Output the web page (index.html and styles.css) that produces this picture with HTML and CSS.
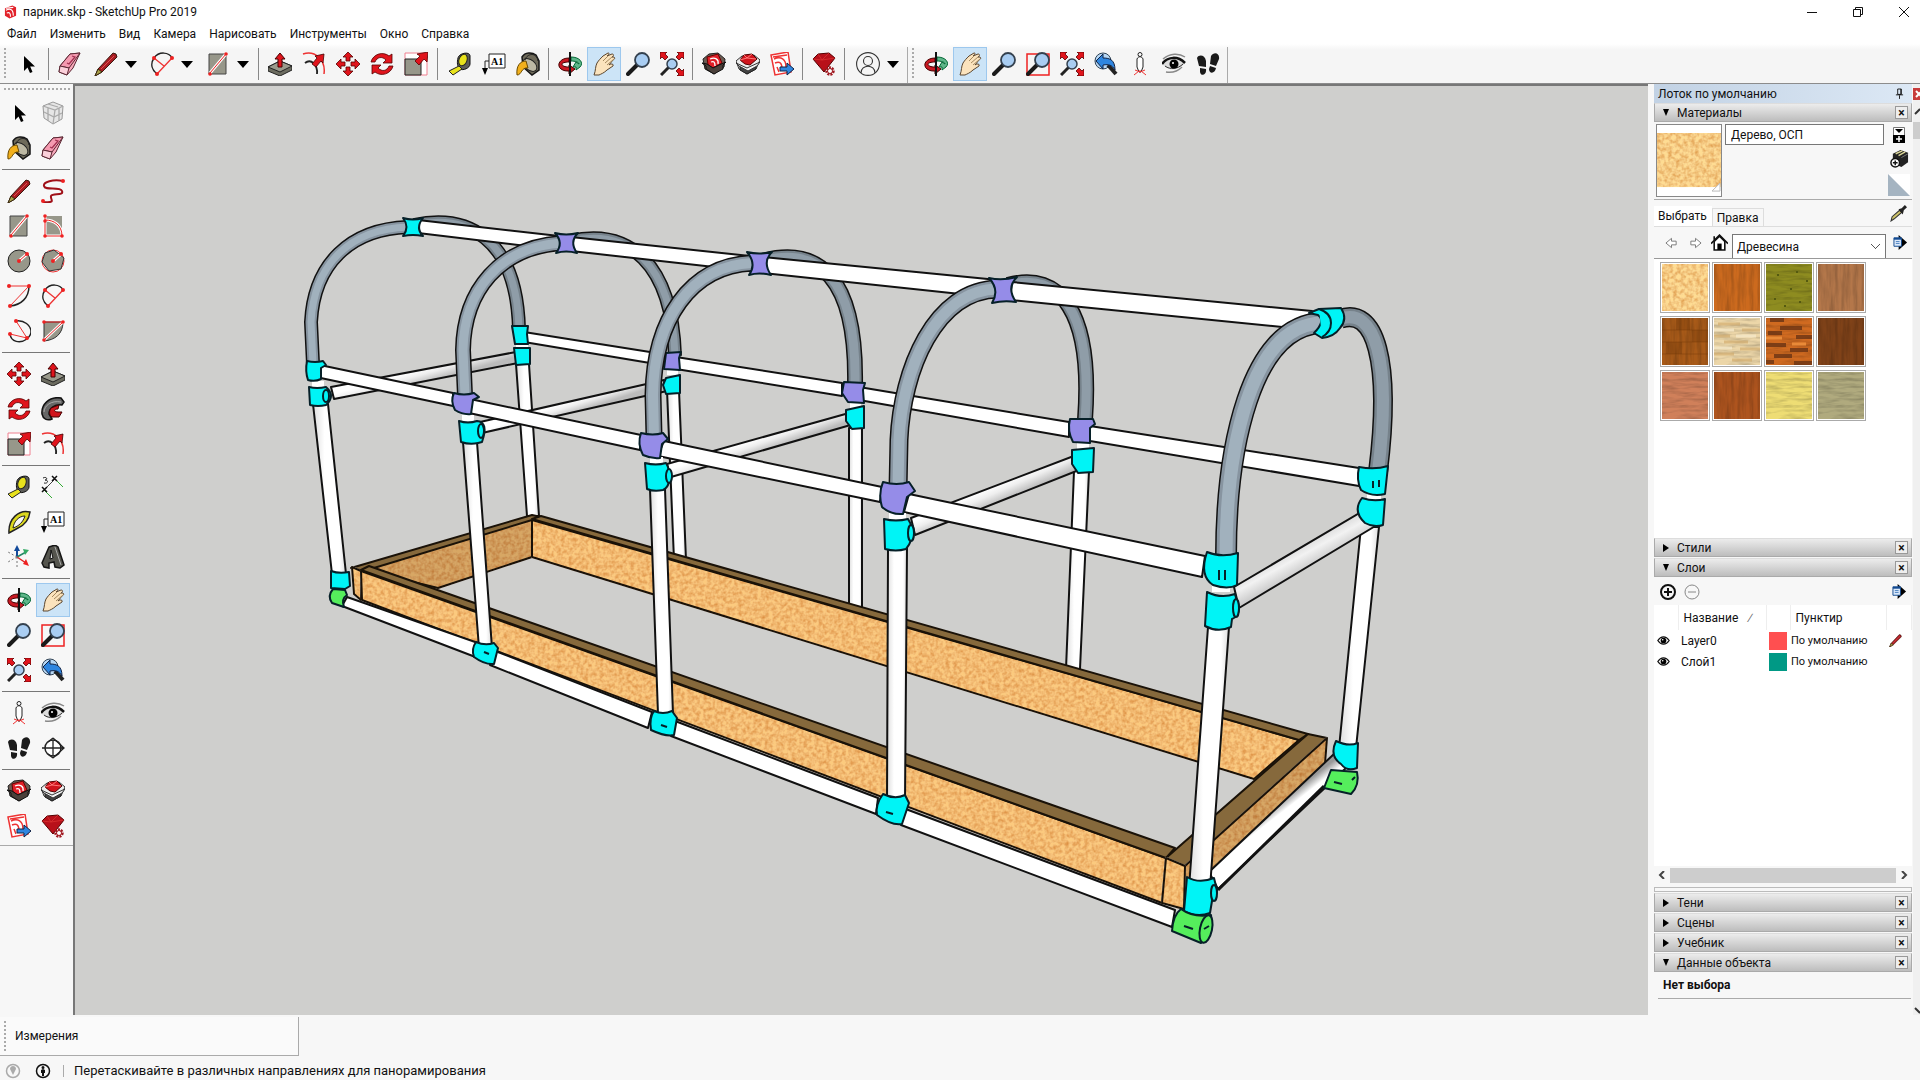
FILE: index.html
```html
<!DOCTYPE html>
<html lang="ru">
<head>
<meta charset="utf-8">
<title>парник.skp - SketchUp Pro 2019</title>
<link rel="stylesheet" href="styles.css">
</head>
<body>
<svg class="defs" aria-hidden="true">
<symbol id="cursor" viewBox="0 0 24 24"><path d="M8 4v15l3.500-3.500L14 21l2.500-1-2.300-5.500H19z"/></symbol>
<symbol id="eraser" viewBox="0 0 24 24"><path d="M12 2l10-1-7 15-6 7-8-3 1-6z" fill="#f7a9bb" stroke="#5b2733"/><path d="M12 2l10-1-11 15-9-2z" fill="#f59ab0" stroke="#5b2733"/><path d="M2 14l9 2-2 7-8-3z" fill="#fbd0da" stroke="#5b2733"/><path d="M14 4l3 1-6 7-2-1" fill="none" stroke="#a03050" stroke-width="1.300"/></symbol>
<symbol id="pencil" viewBox="0 0 24 24"><path d="M19 1l3 1 1 3L8 20l-7 4 3-7z" fill="#a81c22" stroke="#3a1a10"/><path d="M4 17l4 3-7 4z" fill="#a8a04a" stroke="#3a2a10"/><path d="M7 17L20 4" stroke="#e05050"/></symbol>
<symbol id="arc2" viewBox="0 0 24 24"><path d="M4 6C0 12 2 18 7 22" fill="none" stroke="#222" stroke-width="1.500"/><path d="M4 6C9-1 19 0 22 6" fill="none" stroke="#222" stroke-width="1.500"/><path d="M4 6l10 8M22 6L7 22" fill="none" stroke="#e33" stroke-width="1.300"/><g fill="#e22"><circle cx="4" cy="6" r="2"/><circle cx="22" cy="6" r="2"/><circle cx="7" cy="22" r="2"/></g></symbol>
<symbol id="rect" viewBox="0 0 24 24"><path d="M3 2h17v20H3z" fill="#97978a" stroke="#444"/><path d="M4 21L20 2" stroke="#fff" stroke-width="3"/><path d="M4 21L20 2" stroke="#e22"/><g fill="#e22"><circle cx="4" cy="22" r="1.800"/><circle cx="20" cy="2" r="1.800"/></g></symbol>
<symbol id="rrect" viewBox="0 0 24 24"><path d="M4 2h17v20H4z" fill="#97978a"/><path d="M4 6c9 0 17 5 17 16H4V2" fill="none" stroke="#fff" stroke-width="3"/><path d="M4 6c9 0 17 5 17 16H4V2" fill="none" stroke="#e22"/><g fill="#e22"><circle cx="4" cy="2" r="1.800"/><circle cx="4" cy="7" r="1.800"/><circle cx="4" cy="22" r="1.800"/><circle cx="21" cy="22" r="1.800"/></g></symbol>
<symbol id="circle" viewBox="0 0 24 24"><circle cx="12" cy="12" r="11" fill="#97978a" stroke="#222"/><path d="M12 12l8-7" stroke="#fff" stroke-width="3"/><path d="M12 12l8-7" stroke="#e22"/><g fill="#e22"><circle cx="12" cy="12" r="2"/><circle cx="20" cy="5" r="2"/></g></symbol>
<symbol id="poly" viewBox="0 0 24 24"><circle cx="12" cy="12" r="11" fill="none" stroke="#e33"/><path d="M13 1l10 8-3 11-12 2-7-9 3-9z" fill="#97978a" stroke="#333"/><path d="M12 12l8-7" stroke="#fff" stroke-width="3"/><path d="M12 12l8-7" stroke="#e22"/><g fill="#e22"><circle cx="12" cy="12" r="2"/><circle cx="20" cy="5" r="2"/></g></symbol>
<symbol id="arc1" viewBox="0 0 24 24"><path d="M22 2c0 12-8 19-19 20" fill="none" stroke="#222" stroke-width="1.500"/><path d="M2 2h20L3 22" fill="none" stroke="#e33"/><g fill="#e22"><circle cx="2" cy="2" r="2"/><circle cx="22" cy="2" r="2"/><circle cx="3" cy="22" r="2"/></g></symbol>
<symbol id="arc3" viewBox="0 0 24 24"><path d="M9 2c8-1 15 4 15 11 0 3-2 5-4 7-7 5-16 3-17-5" fill="none" stroke="#222" stroke-width="1.500"/><path d="M9 2l11 17L3 15" fill="none" stroke="#e33"/><g fill="#e22"><circle cx="9" cy="2" r="2"/><circle cx="20" cy="19" r="2"/><circle cx="3" cy="15" r="2"/></g></symbol>
<symbol id="pie" viewBox="0 0 24 24"><path d="M3 3h19c0 12-8 18-19 19z" fill="#97978a" stroke="#333"/><path d="M22 3L3 21" stroke="#fff" stroke-width="3"/><path d="M3 3h19L3 21" fill="none" stroke="#e22"/><g fill="#e22"><circle cx="3" cy="3" r="1.800"/><circle cx="22" cy="3" r="1.800"/><circle cx="3" cy="21" r="1.800"/></g></symbol>
<symbol id="free" viewBox="0 0 24 24"><path d="M22 2C12 0 2 3 3 7c1 5 16 0 18 5s-9 2-11 5c-1 4 6 7-8 6" fill="none" stroke="#a01018" stroke-width="2"/><g fill="#e22"><circle cx="22" cy="2" r="2"/><circle cx="2" cy="22" r="2"/></g></symbol>
<symbol id="push" viewBox="0 0 24 24"><path d="M0 15l12-6 12 5v4l-12 6-12-5z" fill="#6c6c60" stroke="#222"/><path d="M0 15l12-6 12 5-12 6z" fill="#9a9a8c" stroke="#222"/><path d="M12 1l5 6h-3v8h-4V7H7z" fill="#e0141c" stroke="#400"/></symbol>
<symbol id="offset" viewBox="0 0 24 24"><path d="M1 2C13-2 24 8 22 22" fill="none" stroke="#e33" stroke-width="1.500"/><path d="M3 11c6-5 13 2 12 11" fill="none" stroke="#222" stroke-width="1.800"/><path d="M22 2l-1 9-2-2-5 6-4-3 5-6-2-2z" fill="#e0141c" stroke="#400" stroke-width=".8"/></symbol>
<symbol id="move" viewBox="0 0 24 24"><g fill="#e0141c" stroke="#500" stroke-width=".8"><path id="mv" d="M12 0l5 5h-3v4h-4V5H7z"/><use href="#mv" transform="rotate(90 12 12)"/><use href="#mv" transform="rotate(180 12 12)"/><use href="#mv" transform="rotate(270 12 12)"/></g></symbol>
<symbol id="rot" viewBox="0 0 24 24"><g fill="#e0141c" stroke="#500" stroke-width=".8"><path id="rt" d="M1 10C3 2 13-1 19 4l3-2v9h-9l3-3C12 4 7 5 5 10z"/><use href="#rt" transform="rotate(180 12 12)"/></g></symbol>
<symbol id="scale" viewBox="0 0 24 24"><path d="M1 1h22v22H1z" fill="#fff" stroke="#f08090"/><path d="M1 7h16v16H1z" fill="#97978a" stroke="#222"/><path d="M24 0l-1 10-3-3-5 6-4-4 5-5-3-2z" fill="#e0141c" stroke="#500" stroke-width=".8"/></symbol>
<symbol id="follow" viewBox="0 0 24 24"><path d="M20 1C8-1 0 8 1 17c1 5 5 7 10 5l-3-5c0-6 6-10 13-9l2-3z" fill="#666" stroke="#111" stroke-width="1.500"/><path d="M3 15c0-6 7-12 17-10" fill="none" stroke="#aaa"/><path d="M10 11l8-3-1 4c-5 0-4 3 0 3l4 0-3 5-7 0c-3-2-3-6-1-9z" fill="#d0141c" stroke="#400"/></symbol>
<symbol id="tape" viewBox="0 0 24 24"><path d="M10 6c1-5 12-7 12-2v8c0 4-7 7-10 5s-3-7-2-11z" fill="#5c5c58" stroke="#111"/><ellipse cx="15" cy="8" rx="4" ry="6" fill="#e8e21c" stroke="#222" transform="rotate(20 15 8)"/><path d="M11 14l3 3-9 6-4-4z" fill="#e8e21c" stroke="#222"/></symbol>
<symbol id="bucket" viewBox="0 0 24 24"><path d="M6 5c3-5 10-5 14-2l3 6v9l-7 5-9-8z" fill="#6e6a5a" stroke="#151515" stroke-width="1.500"/><ellipse cx="14" cy="13" rx="8" ry="5" fill="#bdb9a4" stroke="#222" transform="rotate(40 14 13)"/><path d="M10 9C4 9 0 14 1 23c5 0 4-8 11-7z" fill="#f2b01c" stroke="#6a4a00"/><path d="M9 8c2-7 12-8 13 1" fill="none" stroke="#222"/></symbol>
<symbol id="orbit" viewBox="0 0 24 24"><path d="M11 6C2 6-2 13 3 17c3 2 5 2 8 2v3l6-5-6-4v2c-4 0-7-1-7-3 0-1 3-2 7-2z" fill="#c91822" stroke="#400"/><path d="M13 5c9 0 13 6 9 10l-4 3v-3h-3l3-5 3 2c0-2-4-3-8-3z" fill="#5fb68a" stroke="#063"/><path d="M12 0v24" stroke="#111" stroke-width="2"/></symbol>
<symbol id="hand" viewBox="0 0 24 24"><path d="M2 23c2-5 1-8 3-12 2-3 3-4 6-7l5-3c2 0 1 2-1 3l5-2c2 0 2 2 0 3l2 0c1 1 1 2-1 3l-4 5c1-1 5-2 4 1l-6 4c-3 3-6 4-8 5z" fill="#fbe3bd" stroke="#5a4630"/><path d="M16 4l-5 5M20 5l-7 6M22 7l-7 6" stroke="#a58a60"/></symbol>
<symbol id="zoom" viewBox="0 0 24 24"><path d="M11 13l-9 9" stroke="#1a1a1a" stroke-width="4" stroke-linecap="round"/><circle cx="16" cy="8" r="7" fill="#a9cdf2" stroke="#34414f" stroke-width="1.800"/></symbol>
<symbol id="zwin" viewBox="0 0 24 24"><path d="M1 2h22v21H1z" fill="none" stroke="#e22" stroke-width="1.500"/><use href="#zoom"/></symbol>
<symbol id="zext" viewBox="0 0 24 24"><path d="M9 15l-8 8" stroke="#222" stroke-width="3"/><circle cx="12" cy="12" r="5" fill="#a9cdf2" stroke="#34414f" stroke-width="1.500"/><g fill="#e0141c" stroke="#500" stroke-width=".8"><path d="M0 0h7L5 2l3 3-3 3-3-3-2 2zM24 0h-7l2 2-3 3 3 3 3-3 2 2zM24 24h-7l2-2-3-3 3-3 3 3 2-2z"/></g></symbol>
<symbol id="prev" viewBox="0 0 24 24"><circle cx="9" cy="9" r="8" fill="#b8d8f5" stroke="#345"/><path d="M14 13l8 9" stroke="#222" stroke-width="4"/><path d="M2 9l7-7v4c7 0 12 2 12 12-3-5-6-6-12-5v4z" fill="#2f86e0" stroke="#124"/></symbol>
<symbol id="pos" viewBox="0 0 24 24"><circle cx="12" cy="2.500" r="2" fill="#fff" stroke="#222"/><path d="M9 7c1-3 5-3 6 0v8l-2 5h-2l-2-5z" fill="#fff" stroke="#222"/><path d="M6 23l5-4h2l5 4M7 18l5 2 5-2" fill="none" stroke="#e33"/></symbol>
<symbol id="look" viewBox="0 0 24 24"><path d="M1 7c7-6 16-6 22-2M4 20c6 1 12-1 16-5" fill="none" stroke="#888" stroke-width="1.500"/><path d="M1 11c6-6 16-6 22 0-6 8-15 9-22 2z" fill="#ddd"/><path d="M0 12c6-8 16-8 23-1" fill="none" stroke="#111" stroke-width="2.500"/><path d="M3 14c5 4 13 3 18-2" fill="none" stroke="#333"/><circle cx="12" cy="12" r="4.500"/><circle cx="11" cy="11" r="1" fill="#fff"/></symbol>
<symbol id="feet" viewBox="0 0 24 24"><path d="M1 6c2-4 8-3 9 3v6l-7-1zM4 16l6 1c1 6-5 8-6 3zM15 4c3-5 9-3 8 3l-3 7-6-2zM14 14l6 2c-1 6-7 6-7 1z" fill="#1a1a1a"/></symbol>
<symbol id="section" viewBox="0 0 24 24"><circle cx="12" cy="12" r="8" fill="#fff" stroke="#222" stroke-width="1.500"/><path d="M1 12h22M12 2l11 10-11 10M12 2L7 6M12 22l-5-4M12 4v16" fill="none" stroke="#222" stroke-width="1.300"/></symbol>
<symbol id="protr" viewBox="0 0 24 24"><path d="M23 2C12-1 1 9 2 23l9-5C18 15 22 9 23 2z" fill="#dcd81e" stroke="#222" stroke-width="1.500"/><path d="M18 6C12 6 7 11 6 18c6-2 10-6 12-12z" fill="#f7f7f7" stroke="#222"/></symbol>
<symbol id="dim" viewBox="0 0 24 24"><path d="M3 15L14 4" stroke="#444"/><path d="M3 15l8 8M14 4l8 8" stroke="#3a3"/><path d="M1 12l5 5M6 12l-5 5M11 1l5 5M16 1l-5 5" stroke="#111" stroke-width="1.500"/><path d="M2 3c4-2 5 2 2 2 4 0 3 4-1 3" fill="none" stroke="#222"/></symbol>
<symbol id="axes" viewBox="0 0 24 24"><path d="M10 12V3" stroke="#124a9a" stroke-width="2"/><path d="M7 6l3-6 3 6z" fill="#124a9a"/><path d="M10 12l9-5" stroke="#286" stroke-width="1.500"/><path d="M16 4l6 1-4 5z" fill="#3a6"/><path d="M10 12l9 6" stroke="#d22" stroke-width="1.500"/><path d="M19 14l3 7-6-2z" fill="#e22"/><path d="M10 12v11M10 12L1 7M10 12l-9 5" stroke="#777" stroke-dasharray="2 2"/></symbol>
<symbol id="text3" viewBox="0 0 24 24"><path d="M8 2l6-2 3 2 6 18-4 3-5-1-1-5-5 1v5l-5-1-2-4z" fill="#55554e" stroke="#151515" stroke-width="1.500"/><path d="M10 5l2 8-3 1z" fill="#eee" stroke="#111"/><path d="M14 2l6 18" stroke="#aaa"/></symbol>
<symbol id="component" viewBox="0 0 24 24"><path d="M2 5l10-4 10 4-1 13-9 5-9-6z" fill="#e6e6e6" stroke="#999"/><path d="M2 5l12 4 8-4M14 9l-2 14M7 3l10 3M3 11l10 5 8-4M7 7v13M18 7v13" fill="none" stroke="#aaa" stroke-width="1.300"/></symbol>
<symbol id="wh1" viewBox="0 0 24 24"><path d="M1 7l6-5 9-1 7 6-1 8-10 7-9-5z" fill="#6b5b52" stroke="#222"/><path d="M5 5l11-3 4 9-9 5-5-3z" fill="#e02028" stroke="#600"/><path d="M8 7c5-2 9 0 8 5M9 10c3-1 4 0 4 4" fill="none" stroke="#fff" stroke-width="1.300"/><path d="M0 11l5 1 6 4 6-3 7-3-3 3v4l-9 5-8-5v-3z" fill="#4a403a" stroke="#111"/></symbol>
<symbol id="wh2" viewBox="0 0 24 24"><path d="M0 9l6-5 12-1 6 5-4 9-9 5-8-5z" fill="#eee" stroke="#333"/><path d="M4 14l7 4 9-5v4l-9 5-7-4z" fill="#444" stroke="#222"/><path d="M4 8l4-5 8-1 5 5-7 6-5-1z" fill="#d0141c" stroke="#500"/><path d="M4 8l7-2 9 1M8 3l3 3 5-4" fill="none" stroke="#f77"/><path d="M0 11l11 5 13-6-3 4-9 5-9-5z" fill="#f4f4f4" stroke="#333"/></symbol>
<symbol id="wh3" viewBox="0 0 24 24"><path d="M1 3l17-3 3 20-16 3z" fill="#fff" stroke="#e33" stroke-width="1.500"/><path d="M4 7c7-3 12 0 12 8M5 11c5-2 7 0 7 6M7 15l2 5M3 5l14-2" fill="none" stroke="#e33" stroke-width="1.500"/><path d="M10 15h7v-4l7 6-7 6v-4h-7z" fill="#2f86e0" stroke="#124"/></symbol>
<symbol id="ruby" viewBox="0 0 24 24"><path d="M1 7l5-5 11-1 6 5-11 14z" fill="#b8101a" stroke="#500"/><path d="M1 7l9 1 13-2M6 2l4 6 7-7" fill="none" stroke="#d83030" stroke-width=".8"/><circle cx="18" cy="19" r="3.500" fill="#fff" stroke="#a01820" stroke-width="2.500" stroke-dasharray="2 1"/><circle cx="18" cy="19" r="2.500" fill="none" stroke="#a01820"/></symbol>
<symbol id="user" viewBox="0 0 24 24"><g fill="none" stroke="#333" stroke-width="1.100"><circle cx="12" cy="12" r="11.400"/><circle cx="12" cy="9" r="4.500"/><path d="M5 21c0-9 14-9 14 0"/></g></symbol>
<symbol id="detail" viewBox="0 0 16 16"><path d="M6 0l9 8-9 8z"/><path d="M1 3h8v9H1z" fill="#dbe9fa" stroke="#124a90"/><path d="M1 4h8" stroke="#124a90" stroke-width="2"/><path d="M3 7h4M3 9h4" stroke="#4a80c0"/></symbol>
<symbol id="eye" viewBox="0 0 16 16"><path d="M1 8c4-6 10-6 14 0-4 6-10 6-14 0z" fill="#fff" stroke="#111" stroke-width="1.500"/><circle cx="8" cy="8" r="3.500"/><circle cx="7" cy="7" r="1" fill="#fff"/></symbol>
<filter id="grain" color-interpolation-filters="sRGB"><feTurbulence type="fractalNoise" baseFrequency=".26" numOctaves="2" seed="4"/><feColorMatrix values=".2 0 0 0 .86  .5 0 0 0 .67  .9 0 0 0 .45  0 0 0 0 1"/><feComposite operator="in" in2="SourceGraphic" result="n"/><feBlend mode="multiply" in="SourceGraphic" in2="n"/></filter>
<filter id="fibre" color-interpolation-filters="sRGB"><feTurbulence type="fractalNoise" baseFrequency=".25 .03" numOctaves="3" seed="9"/><feColorMatrix values=".4 0 0 0 .74  .4 0 0 0 .74  .4 0 0 0 .74  0 0 0 0 1"/><feComposite operator="in" in2="SourceGraphic" result="n"/><feBlend mode="multiply" in="SourceGraphic" in2="n"/></filter>
<filter id="fibre-h" color-interpolation-filters="sRGB"><feTurbulence type="fractalNoise" baseFrequency=".05 .3" numOctaves="3" seed="2"/><feColorMatrix values=".4 0 0 0 .75  .4 0 0 0 .75  .4 0 0 0 .75  0 0 0 0 1"/><feComposite operator="in" in2="SourceGraphic" result="n"/><feBlend mode="multiply" in="SourceGraphic" in2="n"/></filter>
</svg>

<header class="titlebar">
  <svg class="logo" viewBox="0 0 14 14"><path d="M1 3l8-3 4 2v9l-7 3-5-3z" fill="#e2222a"/><path d="M2 5c5-2 8-1 8 6M3 8c3-1 4 0 4 4M2 3l8-1" fill="none" stroke="#fff" stroke-width="1.200"/></svg>
  <span class="doc">парник.skp - SketchUp Pro 2019</span>
  <div class="winbtns">
    <button aria-label="Свернуть"><svg viewBox="0 0 10 10"><path d="M0 5.500h10"/></svg></button>
    <button aria-label="Восстановить"><svg viewBox="0 0 10 10"><path d="M.5 2.500h7v7h-7zM2.500 2.500v-2h7v7h-2"/></svg></button>
    <button aria-label="Закрыть"><svg viewBox="0 0 10 10"><path d="M0 0l10 10M10 0L0 10"/></svg></button>
  </div>
</header>
<nav class="menu">
  <a href="#">Файл</a><a href="#">Изменить</a><a href="#">Вид</a><a href="#">Камера</a><a href="#">Нарисовать</a><a href="#">Инструменты</a><a href="#">Окно</a><a href="#">Справка</a>
</nav>

<div class="toolbars">
  <div class="bar">
    <i class="grip"></i>
    <button aria-label="Выбрать"><svg><use href="#cursor"/></svg></button><i class="sep"></i>
    <button aria-label="Ластик"><svg><use href="#eraser"/></svg></button>
    <button class="drop" aria-label="Линия"><svg><use href="#pencil"/></svg><b></b></button>
    <button class="drop" aria-label="Дуга"><svg><use href="#arc2"/></svg><b></b></button>
    <button class="drop" aria-label="Прямоугольник"><svg><use href="#rect"/></svg><b></b></button><i class="sep"></i>
    <button aria-label="Вдавить"><svg><use href="#push"/></svg></button>
    <button aria-label="Смещение"><svg><use href="#offset"/></svg></button>
    <button aria-label="Переместить"><svg><use href="#move"/></svg></button>
    <button aria-label="Повернуть"><svg><use href="#rot"/></svg></button>
    <button aria-label="Масштаб"><svg><use href="#scale"/></svg></button><i class="sep wide"></i>
    <button aria-label="Рулетка"><svg><use href="#tape"/></svg></button>
    <button aria-label="Текст"><svg viewBox="0 0 24 24"><path d="M7 2h16v14H7z" fill="#fff" stroke="#222"/><path d="M7 9H3v9" fill="none" stroke="#222"/><path d="M0 16h6l-3 7z"/><text x="9" y="13" class="mono-glyph">A1</text></svg></button>
    <button aria-label="Заливка"><svg><use href="#bucket"/></svg></button><i class="sep"></i>
    <button aria-label="Орбита"><svg><use href="#orbit"/></svg></button>
    <button class="on" aria-label="Панорама"><svg><use href="#hand"/></svg></button>
    <button aria-label="Лупа"><svg><use href="#zoom"/></svg></button>
    <button aria-label="В размер окна"><svg><use href="#zext"/></svg></button><i class="sep"></i>
    <button aria-label="3D Warehouse"><svg><use href="#wh1"/></svg></button>
    <button aria-label="Поделиться моделью"><svg><use href="#wh2"/></svg></button>
    <button aria-label="LayOut"><svg><use href="#wh3"/></svg></button><i class="sep"></i>
    <button aria-label="Расширения"><svg><use href="#ruby"/></svg></button><i class="sep"></i>
    <button class="drop" aria-label="Вход"><svg><use href="#user"/></svg><b></b></button>
  </div>
  <div class="bar">
    <i class="grip"></i>
    <button aria-label="Орбита"><svg><use href="#orbit"/></svg></button>
    <button class="on" aria-label="Панорама"><svg><use href="#hand"/></svg></button>
    <button aria-label="Лупа"><svg><use href="#zoom"/></svg></button>
    <button aria-label="Окно масштаба"><svg><use href="#zwin"/></svg></button>
    <button aria-label="В размер окна"><svg><use href="#zext"/></svg></button>
    <button aria-label="Предыдущий вид"><svg><use href="#prev"/></svg></button>
    <button aria-label="Положение камеры"><svg><use href="#pos"/></svg></button>
    <button aria-label="Осмотреться"><svg><use href="#look"/></svg></button>
    <button aria-label="Прогулка"><svg><use href="#feet"/></svg></button>
  </div>
</div>

<main class="work">
  <aside class="palette">
    <i class="grip-h"></i>
    <div class="pair"><button aria-label="Выбрать"><svg><use href="#cursor"/></svg></button><button aria-label="Создать компонент"><svg><use href="#component"/></svg></button>
    <button aria-label="Заливка"><svg><use href="#bucket"/></svg></button><button aria-label="Ластик"><svg><use href="#eraser"/></svg></button></div>
    <div class="pair"><button aria-label="Линия"><svg><use href="#pencil"/></svg></button><button aria-label="От руки"><svg><use href="#free"/></svg></button>
    <button aria-label="Прямоугольник"><svg><use href="#rect"/></svg></button><button aria-label="Повёрнутый прямоугольник"><svg><use href="#rrect"/></svg></button>
    <button aria-label="Круг"><svg><use href="#circle"/></svg></button><button aria-label="Многоугольник"><svg><use href="#poly"/></svg></button>
    <button aria-label="Дуга"><svg><use href="#arc1"/></svg></button><button aria-label="Дуга по 2 точкам"><svg><use href="#arc2"/></svg></button>
    <button aria-label="Дуга по 3 точкам"><svg><use href="#arc3"/></svg></button><button aria-label="Сектор"><svg><use href="#pie"/></svg></button></div>
    <div class="pair"><button aria-label="Переместить"><svg><use href="#move"/></svg></button><button aria-label="Вдавить"><svg><use href="#push"/></svg></button>
    <button aria-label="Повернуть"><svg><use href="#rot"/></svg></button><button aria-label="Ведение"><svg><use href="#follow"/></svg></button>
    <button aria-label="Масштаб"><svg><use href="#scale"/></svg></button><button aria-label="Смещение"><svg><use href="#offset"/></svg></button></div>
    <div class="pair"><button aria-label="Рулетка"><svg><use href="#tape"/></svg></button><button aria-label="Размеры"><svg><use href="#dim"/></svg></button>
    <button aria-label="Транспортир"><svg><use href="#protr"/></svg></button><button aria-label="Текст"><svg viewBox="0 0 24 24"><path d="M7 2h16v14H7z" fill="#fff" stroke="#222"/><path d="M7 9H3v9" fill="none" stroke="#222"/><path d="M0 16h6l-3 7z"/><text x="9" y="13" class="mono-glyph">A1</text></svg></button>
    <button aria-label="Оси"><svg><use href="#axes"/></svg></button><button aria-label="3D-текст"><svg><use href="#text3"/></svg></button></div>
    <div class="pair"><button aria-label="Орбита"><svg><use href="#orbit"/></svg></button><button class="on" aria-label="Панорама"><svg><use href="#hand"/></svg></button>
    <button aria-label="Лупа"><svg><use href="#zoom"/></svg></button><button aria-label="Окно масштаба"><svg><use href="#zwin"/></svg></button>
    <button aria-label="В размер окна"><svg><use href="#zext"/></svg></button><button aria-label="Предыдущий вид"><svg><use href="#prev"/></svg></button></div>
    <div class="pair"><button aria-label="Положение камеры"><svg><use href="#pos"/></svg></button><button aria-label="Осмотреться"><svg><use href="#look"/></svg></button>
    <button aria-label="Прогулка"><svg><use href="#feet"/></svg></button><button aria-label="Сечение"><svg><use href="#section"/></svg></button></div>
    <div class="pair"><button aria-label="3D Warehouse"><svg><use href="#wh1"/></svg></button><button aria-label="Поделиться моделью"><svg><use href="#wh2"/></svg></button>
    <button aria-label="LayOut"><svg><use href="#wh3"/></svg></button><button aria-label="Расширения"><svg><use href="#ruby"/></svg></button></div>
  </aside>

  <section class="viewport">
  <svg viewBox="75 86 1573 929" role="img" aria-label="Модель парника">
    <defs>
      <linearGradient id="gA" gradientUnits="userSpaceOnUse" x1="424" y1="368" x2="428" y2="382"><stop offset="0" stop-color="#fff"/><stop offset=".4" stop-color="#eee"/><stop offset="1" stop-color="#bbb"/></linearGradient>
      <linearGradient id="gB" gradientUnits="userSpaceOnUse" x1="571" y1="401" x2="575" y2="413"><stop offset="0" stop-color="#fff"/><stop offset=".4" stop-color="#eee"/><stop offset="1" stop-color="#bbb"/></linearGradient>
      <linearGradient id="gC" gradientUnits="userSpaceOnUse" x1="758" y1="438" x2="763" y2="452"><stop offset="0" stop-color="#fff"/><stop offset=".4" stop-color="#eee"/><stop offset="1" stop-color="#bbb"/></linearGradient>
      <linearGradient id="gD" gradientUnits="userSpaceOnUse" x1="994" y1="486" x2="1001" y2="502"><stop offset="0" stop-color="#fff"/><stop offset=".4" stop-color="#eee"/><stop offset="1" stop-color="#bbb"/></linearGradient>
      <linearGradient id="gE" gradientUnits="userSpaceOnUse" x1="1300" y1="546" x2="1311" y2="566"><stop offset="0" stop-color="#ddd"/><stop offset=".4" stop-color="#f2f2f2"/><stop offset="1" stop-color="#ccc"/></linearGradient>
      <linearGradient id="gF" gradientUnits="userSpaceOnUse" x1="1270" y1="810" x2="1284" y2="828"><stop offset="0" stop-color="#999"/><stop offset=".4" stop-color="#fff"/><stop offset="1" stop-color="#fff"/></linearGradient>
      <linearGradient id="gP"><stop offset="0" stop-color="#ddd"/><stop offset=".35" stop-color="#fff"/><stop offset=".8" stop-color="#fff"/><stop offset="1" stop-color="#ddd"/></linearGradient>
    </defs>

    <g class="ink pole">
      <path d="M516 364L529 364 539 516H527z"/><path d="M667 390H679L686 560H674z"/><path d="M849 428H862V608H849z"/><path d="M1074 471H1089L1080 669H1066z"/>
      <path d="M1361 527H1379L1356 748H1339z"/>
    </g>

    <g class="wood">
      <path class="face shade" d="M364 570L532 519V557L438 588z"/>
      <path class="top" d="M351 568L532 515 541 517 532 520 364 571z"/>
      <path class="face" d="M532 520L1299 740 1254 779 532 557z"/>
      <path class="top" d="M541 516L1308 734 1299 740 532 519z"/>
      <path class="top" d="M1166 858L1308 734 1327 738 1185 866z"/>
      <path class="face shade" d="M1185 866L1327 738 1325 764 1205 880 1184 907z"/>
    </g>

    <g class="ink rail">
      <path d="M524 332L650 352 676 357 676 369 650 363 524 342z"/><path d="M676 357L842 383V396L676 369z"/>
      <path d="M859 387L1069 422V437L859 400z"/><path d="M1090 426L1359 468V486L1090 441z"/>
    </g>
    <g class="ink">
      <path fill="url(#gA)" d="M331 387L516 352 518 363 334 399z"/>
      <path fill="url(#gB)" d="M480 422L664 380 667 391 482 433z"/>
      <path fill="url(#gC)" d="M667 464L849 413 854 424 671 477z"/>
      <path fill="url(#gD)" d="M911 518L1079 454 1084 468 915 535z"/>
      <path fill="url(#gE)" d="M1234 587L1368 508 1377 525 1239 608z"/>
      <path fill="url(#gF)" d="M1209 872L1335 753 1347 767 1218 889z"/>
      <path class="heavy" d="M1218 890L1324 786"/>
    </g>

    <g class="hoops back">
      <g class="w12"><path d="M414 225C466 214 517 236 519 330"/><path d="M414 225C466 214 517 236 519 330"/><path d="M414 225C466 214 517 236 519 330"/></g>
      <g class="w12"><path d="M570 241C628 228 672 262 675 356"/><path d="M570 241C628 228 672 262 675 356"/><path d="M570 241C628 228 672 262 675 356"/></g>
      <g class="w14"><path d="M762 261C818 246 857 276 855 385"/><path d="M762 261C818 246 857 276 855 385"/><path d="M762 261C818 246 857 276 855 385"/></g>
      <g class="w14"><path d="M1008 285C1060 271 1093 311 1085 420"/><path d="M1008 285C1060 271 1093 311 1085 420"/><path d="M1008 285C1060 271 1093 311 1085 420"/></g>
      <g class="w18"><path d="M1340 319C1375 306 1392 360 1378 472"/><path d="M1340 319C1375 306 1392 360 1378 472"/><path d="M1340 319C1375 306 1392 360 1378 472"/></g>
    </g>

    <g class="collar"><path d="M516 345h12M667 372h11M850 405h11M1077 446h12M1367 496h14"/></g>
    <g class="joint cyan">
      <path d="M512 326h16l-1 8 1 10h-13z"/><path d="M514 348h16v16l-14 1z"/><path d="M666 378l14-3v18l-14 1-3-9z"/><path d="M846 410l18-4v22l-12 1-6-8z"/>
      <path d="M1072 450l22-2-1 24-15 1-6-9z"/><path d="M1359 467q16 3 29-1l-3 28q-14 3-24-4-5-10-2-23z"/><path d="M1362 498q12 4 23 1l-2 26q-9 3-18-2-13-12-3-25z"/>
      <path d="M1336 741q12 6 22 2l-1 25q-10 4-16-4-12-8-5-23z"/>
    </g>
    <g class="joint violet">
      <path d="M666 353l15-1-2 6 1 12-16-1z"/><path d="M844 382l21 1-2 7 1 13-16-1-6-9z"/><path d="M1070 419h23l2 5-5 4v15l-17-1q-6-11-3-23z"/>
    </g>
    <g class="joint green"><path d="M1331 770l26 2q3 13-6 22l-27-6z"/><path d="M1334 782l8 2M1352 780l3-3"/></g>

    <g class="ink rail">
      <path d="M418 220L559 236V250L418 233z"/><path d="M571 237L750 256V271L571 251z"/><path d="M763 257L998 280V298L763 273z"/><path d="M1012 282L1312 311V330L1010 300z"/>
    </g>

    <g class="hoops">
      <g class="w12"><path d="M313 364L311 322C314 264 350 229 408 227"/><path d="M313 364L311 322C314 264 350 229 408 227"/><path d="M313 364L311 322C314 264 350 229 408 227"/></g>
      <g class="w14"><path d="M465 396L463 350C464 290 500 247 562 243"/><path d="M465 396L463 350C464 290 500 247 562 243"/><path d="M465 396L463 350C464 290 500 247 562 243"/></g>
      <g class="w15"><path d="M654 436L653 395C654 320 690 266 752 263"/><path d="M654 436L653 395C654 320 690 266 752 263"/><path d="M654 436L653 395C654 320 690 266 752 263"/></g>
      <g class="w17"><path d="M898 489L899 440C902 370 935 290 998 289"/><path d="M898 489L899 440C902 370 935 290 998 289"/><path d="M898 489L899 440C902 370 935 290 998 289"/></g>
      <g class="w20"><path d="M1226 557C1226 450 1250 325 1322 323"/><path d="M1226 557C1226 450 1250 325 1322 323"/><path d="M1226 557C1226 450 1250 325 1322 323"/></g>
    </g>

    <g class="wood">
      <path class="face" d="M352 567L361 571V600L354 594z"/>
      <path class="face" d="M361 571L1166 858 1162 903 362 600z"/>
      <path class="top" d="M369 566L1175 848 1166 858 361 570z"/>
      <path class="face" d="M1166 858L1185 866 1184 909 1162 903z"/>
    </g>

    <g class="ink rail">
      <path d="M347 597L478 643 478 658 342 606z"/><path d="M490 649L652 712 648 728 490 665z"/><path d="M675 721L878 798 876 814 671 736z"/><path d="M903 808L1175 910 1172 927 901 825z"/>
      <path d="M320 365L453 393V406L316 377z"/><path d="M470 399L641 435 640 450 469 413z"/><path d="M664 441L882 487 880 502 658 456z"/><path d="M909 494L1205 556 1202 577 904 512z"/>
    </g>
    <g class="ink pole">
      <path d="M313 404H328L346 574H332z"/><path d="M463 442H477L492 648H479z"/><path d="M650 489H665L673 714H658z"/><path d="M888 548H907L905 802H887z"/><path d="M1208 627H1229L1210 888H1189z"/>
    </g>
    <g class="collar"><path d="M312 384h12M462 418h12M650 460h13M889 516h17M1212 589h18"/></g>

    <g class="joint cyan">
      <path d="M403 218q10 3 20 0-8 10 0 18-10-2-20 0 7-9 0-18z"/>
      <path d="M307 361q8 2 16 0l3 4-5 3v11q-6 3-13 1-3-9-1-19z"/><path d="M309 387q8 2 17 0 10 9 0 18-8 2-16 0z"/>
      <path d="M459 421q9 3 18 0 12 1 5 21l-4 1q-8 2-17-1z"/><path d="M645 463q11 3 21 0 4 6 3 18-1 7-6 9-9 2-16-1z"/>
      <path d="M884 519q12 3 24 0l5 9q0 13-7 21-10 3-21 0z"/>
      <path d="M1207 552q14 6 31 1l-1 32q-9 5-24 0-14-9-6-33z"/><path d="M1207 592q14 7 28 2l4 15q-1 8-7 10l-1 8q-13 6-26-1z"/>
      <path d="M1309 313l10-4 22-1q7 11-1 20-6 9-18 10l-8-5q12-12 4-18z"/><path d="M1319 309q12 4 12 14 0 9-9 14"/>
      <path d="M331 571q8 3 18 1l1 14-5 3-14-1z"/><path d="M476 642q9 4 18 1l4 5-4 16q-9 1-20-7-3-8 2-15z"/><path d="M654 711q9 4 18 0l5 7-3 17q-8 2-23-5-2-12 3-19z"/>
      <path d="M883 794q12 6 22 1l4 8-7 21q-10 2-25-9-2-10 6-21z"/><path d="M1187 877q12 7 27 1l3 12q-1 9-5 11l-2 12q-13 5-26-2z"/>
      <path class="tick" d="M1219 570v10M1225 570v10M1373 481v7M1379 480v7M886 812l7 2M484 652l5 2M661 725l6 2"/>
      <ellipse cx="911" cy="533" rx="3" ry="8"/><ellipse cx="481" cy="431" rx="3" ry="7"/><ellipse cx="669" cy="476" rx="3" ry="7"/><ellipse cx="326" cy="396" rx="3" ry="6"/><ellipse cx="1236" cy="608" rx="3" ry="9"/><ellipse cx="1214" cy="893" rx="3" ry="8"/>
    </g>
    <g class="joint violet">
      <path d="M555 233q11 3 23 0-9 9-1 20-11-3-21 0 8-10-1-20z"/><path d="M747 252q12 3 25 0-10 10-1 23-12-3-22 0 8-11-2-23z"/><path d="M989 278q13 3 28-1-11 11-1 25-12-2-24 1 8-13-3-25z"/>
      <path d="M454 393q10 3 20 0l5 4-6 3-2 14q-8 1-16-4-5-9-1-17z"/><path d="M641 433q12 3 22 0l5 6-6 5-2 14q-8 1-17-3-6-11-2-22z"/><path d="M883 482q14 4 26 0l6 9-8 6-4 17q-12 1-21-7-4-13 1-25z"/>
    </g>
    <g class="joint green"><path d="M333 589l12 1 2 5q-6 4-3 12l-12-4q-5-7 1-14z"/><path d="M1181 909q12 9 30 6 3 18-10 28l-29-12q1-16 9-22z"/><ellipse cx="1206" cy="929" rx="6" ry="14" transform="rotate(12 1206 929)"/><path d="M1184 926l9 3M1204 929l5-3"/></g>
  </svg>
  </section>

  <aside class="tray">
    <div class="tray-title"><span>Лоток по умолчанию</span><svg viewBox="0 0 10 12"><path d="M3 1h4v6H3zM1 7.500h8M5 8v4M6.500 1v6" fill="none" stroke="#111"/></svg></div>
    <div class="tray-body">
      <h2 class="open"><button>Материалы</button><button class="x" aria-label="Закрыть">×</button></h2>
      <div class="material">
        <svg class="preview" viewBox="0 0 64 72" preserveAspectRatio="none"><path fill="#fff" d="M0 0h64v72H0z"/><path class="osp" d="M0 8h64v55H0z"/><path fill="#fff" d="M0 0h64v8H0zM0 63h64v9H0z"/><path d="M55 67l8-8v8z" fill="#fff" stroke="#bbb"/></svg>
        <input type="text" value="Дерево, ОСП" aria-label="Название материала">
        <div class="mat-tools">
          <svg viewBox="0 0 12 16"><path d="M.5.5h11v15H.5z" fill="#fff" stroke="#777"/><path d="M2 2h8L6 6zM0 8h12v8H0z"/><path d="M6 9v6M3 12h6" stroke="#fff" stroke-width="1.500"/></svg>
          <svg class="box" viewBox="0 0 20 20"><path d="M3 5l8-4 8 3v10l-7 5-9-4z" fill="#222"/><path d="M6 5l7-3M9 7l7-4" stroke="#ddd89a" stroke-width="1.500"/><path d="M12 9l7-4" stroke="#777"/><circle cx="5.500" cy="14.500" r="4.500" fill="#fff" stroke="#111" stroke-width="1.500"/><path d="M5.500 12v5M3 14.500h5" stroke="#111" stroke-width="1.500"/></svg>
          <svg class="tri" viewBox="0 0 22 22"><path fill="#fff" d="M0 0h22v22z"/><path fill="#a5b4c1" d="M0 0l22 22H0z"/></svg>
        </div>
      </div>
      <div class="tabs"><button class="active">Выбрать</button><button>Правка</button><svg viewBox="0 0 16 16"><path d="M1 15l1-4 7-6 2 2-7 6z" fill="#cfc46a" stroke="#333"/><path d="M8 4l3-1 3-3 2 2-3 3-1 4z" fill="#222"/></svg></div>
      <div class="library">
        <svg viewBox="0 0 14 12"><path d="M1 6l6-5v3h5v4H7v3z" fill="#fff" stroke="#777"/></svg>
        <svg viewBox="0 0 14 12"><path d="M13 6L7 1v3H2v4h5v3z" fill="#fff" stroke="#777"/></svg>
        <svg class="home" viewBox="0 0 16 16"><path d="M3 7v8h10V7L8 2z" fill="#fff" stroke="#111" stroke-width="1.500"/><path d="M0 9l8-8 8 8M3 2v4" fill="none" stroke="#111" stroke-width="1.500"/><path d="M6 9h4v6H6z"/></svg>
        <select aria-label="Библиотека"><option>Древесина</option></select>
        <svg class="go"><use href="#detail"/></svg>
      </div>
      <div class="swatches">
        <svg viewBox="0 0 46 47"><path class="osp" d="M0 0h46v47H0z"/></svg>
        <svg viewBox="0 0 46 47"><path class="v" fill="#cc6a1e" d="M0 0h46v47H0z"/></svg>
        <svg viewBox="0 0 46 47"><path class="h" fill="#8e8c20" d="M0 0h46v47H0z"/><path d="M11 11h2M30 8h2M40 17h2M24 25h2M8 35h2M33 38h2M18 42h2" stroke="#555a10" stroke-width="2"/></svg>
        <svg viewBox="0 0 46 47"><path class="v" fill="#b4774a" d="M0 0h46v47H0z"/></svg>
        <svg viewBox="0 0 46 47"><path class="v" fill="#a85a18" d="M0 0h46v47H0z"/><path d="M0 12h46M0 24h46M0 36h46" stroke="#7a3c08" opacity=".5"/><path d="M14 0h14v12H14zM30 12h16v12H30zM4 24h16v12H4z" fill="#6e3508" opacity=".3"/></svg>
        <svg viewBox="0 0 46 47"><path class="h" fill="#ecd6a8" d="M0 0h46v47H0z"/><path d="M4 6h22M28 12h18M0 18h16M10 24h24M26 31h20M0 36h20M18 42h20" stroke="#d0a868" stroke-width="3" opacity=".6"/><path d="M0 12h20M22 18h20M0 30h18" stroke="#f5e8c8" stroke-width="3" opacity=".8"/></svg>
        <svg viewBox="0 0 46 47"><path class="h" fill="#d06a20" d="M0 0h46v47H0z"/><path d="M4 2h14M14 10h22M2 15h14M30 19h16M0 27h20M24 32h18M8 38h18M28 45h18M0 44h8" stroke="#6b3414" stroke-width="4" opacity=".8"/><path d="M0 20h16M26 26h14" stroke="#e98a38" stroke-width="3"/></svg>
        <svg viewBox="0 0 46 47"><path class="v" fill="#804218" d="M0 0h46v47H0z"/></svg>
        <svg viewBox="0 0 46 47"><path class="h" fill="#d0805a" d="M0 0h46v47H0z"/></svg>
        <svg viewBox="0 0 46 47"><path class="v" fill="#ae541e" d="M0 0h46v47H0z"/></svg>
        <svg viewBox="0 0 46 47"><path class="h" fill="#eedd74" d="M0 0h46v47H0z"/></svg>
        <svg viewBox="0 0 46 47"><path class="h" fill="#b0aa7e" d="M0 0h46v47H0z"/></svg>
      </div>
      <h2><button>Стили</button><button class="x" aria-label="Закрыть">×</button></h2>
      <h2 class="open"><button>Слои</button><button class="x" aria-label="Закрыть">×</button></h2>
      <div class="layer-tools">
        <button aria-label="Добавить слой"><svg viewBox="0 0 16 16"><circle cx="8" cy="8" r="7"/><path d="M8 4v8M4 8h8"/></svg></button>
        <button class="off" aria-label="Удалить слой"><svg viewBox="0 0 16 16"><circle cx="8" cy="8" r="7"/><path d="M4 8h8"/></svg></button>
        <svg class="go"><use href="#detail"/></svg>
      </div>
      <div class="layers">
        <table>
          <thead><tr><th class="c-eye"></th><th class="c-name">Название<span>∕</span></th><th class="c-col"></th><th class="c-dash">Пунктир</th><th></th></tr></thead>
          <tbody>
            <tr><td><svg><use href="#eye"/></svg></td><td>Layer0</td><td><i class="chip red"></i></td><td>По умолчанию</td><td><svg><use href="#pencil"/></svg></td></tr>
            <tr><td><svg><use href="#eye"/></svg></td><td>Слой1</td><td><i class="chip teal"></i></td><td>По умолчанию</td><td></td></tr>
          </tbody>
        </table>
      </div>
      <div class="hscroll"><svg viewBox="0 0 8 8"><path d="M6 0L2 4l4 4"/></svg><i></i><svg viewBox="0 0 8 8"><path d="M2 0l4 4-4 4"/></svg></div>
      <div class="split"></div>
      <h2><button>Тени</button><button class="x" aria-label="Закрыть">×</button></h2>
      <h2><button>Сцены</button><button class="x" aria-label="Закрыть">×</button></h2>
      <h2><button>Учебник</button><button class="x" aria-label="Закрыть">×</button></h2>
      <h2 class="open"><button>Данные объекта</button><button class="x" aria-label="Закрыть">×</button></h2>
      <p class="none">Нет выбора</p>
    </div>
  </aside>
  <div class="vscroll"><button aria-label="Закрыть лоток"><svg viewBox="0 0 7 8"><path d="M3 1l6 6M9 1L3 7"/></svg></button><svg viewBox="0 0 7 8"><path d="M2 6l5-5"/></svg><i></i><svg class="down" viewBox="0 0 7 8"><path d="M2 1l5 5"/></svg></div>
</main>

<footer>
  <div class="measure"><i class="grip"></i><span>Измерения</span></div>
  <div class="status">
    <svg class="dim" viewBox="0 0 16 16"><circle cx="8" cy="8" r="6.500"/><path d="M5 6c0-4 6-4 6 0L8 12z" class="solid"/></svg>
    <svg viewBox="0 0 16 16"><circle cx="8" cy="8" r="6.500"/><path class="solid" d="M8 3a1.500 1.500 0 010 3l2 1v3H9v3H7v-3H6V7l2-1a1.500 1.500 0 010-3z"/></svg>
    <span>Перетаскивайте в различных направлениях для панорамирования</span>
  </div>
</footer>
</body>
</html>
```
FILE: styles.css
```css
* { box-sizing: border-box; }
body {
  margin: 0;
  min-height: 100vh;
  display: flex;
  flex-direction: column;
  background: #f7f7f7;
  color: #111;
  font: 12px/16px Roboto, "Noto Sans", sans-serif;
}
button { border: 0; padding: 0; background: none; font: inherit; color: inherit; }
.defs { position: absolute; width: 0; height: 0; }
.mono-glyph { font: bold 10px "Liberation Serif", serif; }

.titlebar { display: flex; align-items: center; height: 24px; background: #fff; padding-left: 4px; }
.logo { width: 13px; height: 14px; margin-right: 6px; }
.winbtns { margin-left: auto; display: flex; }
.winbtns button { width: 46px; height: 20px; display: flex; align-items: center; justify-content: center; }
.winbtns { margin-right: -7px; overflow: hidden; }
.winbtns svg { width: 10px; height: 10px; fill: none; stroke: #111; }
.menu { display: flex; gap: 13px; height: 20px; padding-left: 7px; align-items: center; background: #fff; }
.menu a { color: inherit; text-decoration: none; }

.toolbars { display: flex; height: 40px; padding-top: 3px; border-bottom: 1px solid #8c8c8c; background: linear-gradient(#fff, #f5f5f5 6px); }
.bar { display: flex; align-items: flex-start; padding-right: 2px; border-right: 1px solid #aaa; }
.grip { width: 2px; height: 32px; margin: 1px 5px 0 4px; background: repeating-linear-gradient(#aaa 0 2px, transparent 2px 4px); }
.bar button, .pair button { width: 34px; height: 34px; display: flex; align-items: center; justify-content: center; }
.bar button svg, .pair button svg { width: 24px; height: 24px; flex: none; }
.bar .drop { width: 56px; gap: 7px; }
.drop b { border: 6px solid transparent; border-top: 7px solid #000; border-bottom: 0; }
.bar .on, .pair .on { background: #cce4f7; outline: 1px solid #9dc8ee; outline-offset: -1px; }
.sep { width: 1px; height: 32px; margin: 1px 4px 0 3px; background: #888; }
.sep.wide { margin: 1px 5px 0 4px; }

.work { flex: 1; display: flex; min-height: 0; }
.palette { width: 73px; flex: none; padding: 4px 3px 0 2px; align-self: flex-start; border-bottom: 1px solid #aaa; }
.grip-h { display: block; height: 2px; margin: 0 0 5px 2px; background: repeating-linear-gradient(90deg, #aaa 0 2px, transparent 2px 4px); }
.pair { display: grid; grid-template-columns: 34px 34px; grid-auto-rows: 35px; align-items: center; }
.pair + .pair { margin-top: 4px; padding-top: 3px; border-top: 1px solid #777; }
.pair:last-child { padding-bottom: 2px; }
.viewport { flex: 1; min-width: 0; background: #cfcfcd; border-left: 2px solid #777; border-top: 2px solid #777; overflow: hidden; display: flex; }
.viewport svg { width: 100%; height: auto; display: block; }

.ink path { stroke: #111; stroke-width: 2; stroke-linejoin: round; }
.pole path { fill: url(#gP); }
.rail path { fill: #fff; }
.ink .heavy { stroke-width: 3; }
.wood .face { fill: #fcca7e; }
.wood .shade { fill: #d8a764; }
.wood .top { fill: #86693c; }
.wood path { stroke: #1a1208; stroke-width: 2; filter: url(#grain); stroke-linejoin: round; }
.wood .top { filter: none; }
.hoops path { fill: none; stroke: #111; }
.hoops path + path { stroke: #8794a0; }
.hoops path + path + path { stroke: #a1b1bd; }
.back path + path { stroke: #76828b; }
.back path + path + path { stroke: #8f9da8; }
.w12 path { stroke-width: 14; } .w12 path + path { stroke-width: 11; } .w12 path + path + path { stroke-width: 7; }
.w14 path { stroke-width: 16; } .w14 path + path { stroke-width: 13; } .w14 path + path + path { stroke-width: 9; }
.w15 path { stroke-width: 17; } .w15 path + path { stroke-width: 14; } .w15 path + path + path { stroke-width: 10; }
.w17 path { stroke-width: 19; } .w17 path + path { stroke-width: 16; } .w17 path + path + path { stroke-width: 11; }
.w18 path { stroke-width: 20; } .w18 path + path { stroke-width: 17; } .w18 path + path + path { stroke-width: 12; }
.w20 path { stroke-width: 22; } .w20 path + path { stroke-width: 19; } .w20 path + path + path { stroke-width: 13; }
.joint path, .joint ellipse { stroke: #062028; stroke-width: 2; stroke-linejoin: round; }
.cyan { fill: #00f4f6; }
.joint .tick { fill: none; }
.violet { fill: #958ce8; }
.green { fill: #55ee5c; }
.collar path { stroke: #fff; stroke-width: 6; }

.tray { width: 260px; flex: none; margin-left: 5px; padding-left: 1px; display: flex; flex-direction: column; }
.tray-title { display: flex; justify-content: space-between; align-items: center; height: 19px; margin-right: 1px; padding: 0 8px 0 4px; background: linear-gradient(90deg, #c2d2e4, #dce8f5); }
.tray-title svg { width: 9px; height: 11px; }
.tray-body { padding-right: 1px; }
.tray h2 { display: flex; align-items: center; height: 19px; margin: 0 0 1px; padding: 0 3px 0 8px; border: 1px solid #aaa; border-top-color: #ddd; background: linear-gradient(#ececec, #bdbdbd); font-size: 12px; font-weight: 400; }
.tray h2 button:first-child { flex: 1; text-align: left; display: flex; align-items: center; gap: 8px; line-height: 16px; }
.tray h2 button:first-child::before { content: ""; width: 0; border: 4px solid transparent; border-left: 6px solid #000; border-right: 0; }
.tray h2.open button:first-child::before { border: 3px solid transparent; border-top: 7px solid #000; border-bottom: 0; }
.tray h2 .x { width: 13px; height: 13px; border: 1px solid #999; background: #eee; line-height: 10px; font-weight: 700; }
.material { display: flex; padding: 1px 0 2px 2px; border-bottom: 1px solid #aaa; gap: 3px; align-items: flex-start; }
.preview { width: 66px; height: 73px; flex: none; border: 1px solid #888; }
.osp { fill: #ffdc92; filter: url(#grain); }
.material input { width: 159px; height: 21px; flex: none; border: 1px solid #777; background: #fff; padding: 0 5px; font: inherit; color: inherit; }
.mat-tools { display: flex; flex-direction: column; align-items: center; gap: 6px; padding-top: 3px; width: 24px; flex: none; }
.mat-tools svg { width: 12px; height: 16px; }
.mat-tools .box { width: 19px; height: 19px; }
.mat-tools .tri { width: 22px; height: 22px; }
.tabs { display: flex; align-items: flex-end; height: 27px; border-bottom: 1px solid #ddd; }
.tabs button { height: 18px; padding: 0 4px; border: 1px solid #ddd; border-bottom: 0; }
.tabs .active { height: 20px; padding: 0 5px 0 4px; background: #fff; border: 0; }
.tabs svg { width: 17px; height: 17px; margin: 0 5px 4px auto; }
.library { display: flex; align-items: center; height: 32px; padding: 0 4px 0 11px; border-bottom: 1px solid #999; gap: 11px; }
.library svg { width: 13px; height: 12px; flex: none; }
.library .home { width: 17px; height: 17px; margin-left: -2px; }
.library select { flex: 1; min-width: 0; height: 24px; align-self: flex-end; margin: 0 -4px 0 -7px; border: 1px solid #777; border-bottom: 0; padding: 0 4px; font: inherit; color: inherit; appearance: none; background: linear-gradient(45deg, transparent 47%, #555 47% 55%, transparent 55%) right 9px center / 5px 5px no-repeat, linear-gradient(-45deg, transparent 47%, #555 47% 55%, transparent 55%) right 5px center / 5px 5px no-repeat, #fff; }
.library svg.go, svg.go { width: 15px; height: 15px; }
.swatches { display: grid; grid-template-columns: repeat(4, 50px); gap: 3px 2px; padding: 3px 6px 117px; background: #fff; }
.swatches svg { width: 50px; height: 51px; padding: 1px; border: 1px solid #aaa; background: #fff; }
.v { filter: url(#fibre); }
.h { filter: url(#fibre-h); }
.layer-tools { display: flex; align-items: center; gap: 8px; height: 27px; padding: 0 5px 0 6px; }
.layer-tools button { height: 16px; }
.layer-tools button svg { width: 16px; height: 16px; fill: none; stroke: #111; stroke-width: 2; display: block; }
.layer-tools .off svg { stroke: #888; stroke-width: 1; }
.layer-tools .go { margin-left: auto; }
.layers { height: 261px; background: #fff; }
.layers table { width: 100%; border-collapse: collapse; table-layout: fixed; }
.layers th { height: 25px; padding: 0 0 0 5px; text-align: left; font-weight: 400; border-right: 1px solid #eee; }
.layers th span { float: right; color: #666; margin-right: 14px; }
.layers td { height: 21px; padding: 0 0 0 3px; }
.c-eye { width: 24px; } .c-name { width: 88px; } .c-col { width: 24px; } .c-dash { width: 96px; }
.layers td svg { width: 13px; height: 13px; display: block; }
.layers td:nth-child(4) { padding-left: 1px; white-space: nowrap; font-size: 11px; }
.chip { display: block; width: 18px; height: 18px; }
.red { background: #ff4f50; }
.teal { background: #009985; }
.hscroll { display: flex; align-items: center; gap: 4px; height: 18px; padding: 0 4px; }
.hscroll i { flex: 1; height: 15px; background: #cdcdcd; }
.hscroll svg { width: 8px; height: 8px; fill: none; stroke: #444; stroke-width: 2; }
.split { height: 5px; margin: 3px 0 1px; border: 1px solid #bbb; }
.none { margin: 0 1px 0 4px; padding: 4px 5px 5px; font-weight: 700; border-bottom: 1px solid #aaa; }
.vscroll { width: 7px; flex: none; overflow: hidden; display: flex; flex-direction: column; background: #f0f0f0; }
.vscroll button { width: 7px; height: 12px; margin: 4px 0 8px; background: #c83c3c; }
.vscroll svg { width: 7px; height: 8px; fill: none; stroke: #333; stroke-width: 2; display: block; }
.vscroll button svg { stroke: #fff; }
.vscroll i { height: 17px; margin-top: 6px; background: #cdcdcd; }
.vscroll .down { margin-top: auto; }

.measure { display: flex; align-items: center; width: 299px; height: 39px; margin-top: 2px; background: #fafafa; border: 1px solid #aaa; border-width: 0 1px 1px 0; }
.measure span { margin-left: 4px; }
.status { display: flex; align-items: center; height: 24px; padding: 5px 0 0 5px; gap: 14px; font-size: 13px; }
.status span { border-left: 1px solid #aaa; line-height: 12px; padding-left: 10px; margin-left: -2px; }
.status svg { width: 16px; height: 16px; fill: none; stroke: #111; stroke-width: 1.500; }
.status .dim { stroke: #aaa; color: #aaa; }
.status .solid { fill: currentColor; stroke: none; }
```
